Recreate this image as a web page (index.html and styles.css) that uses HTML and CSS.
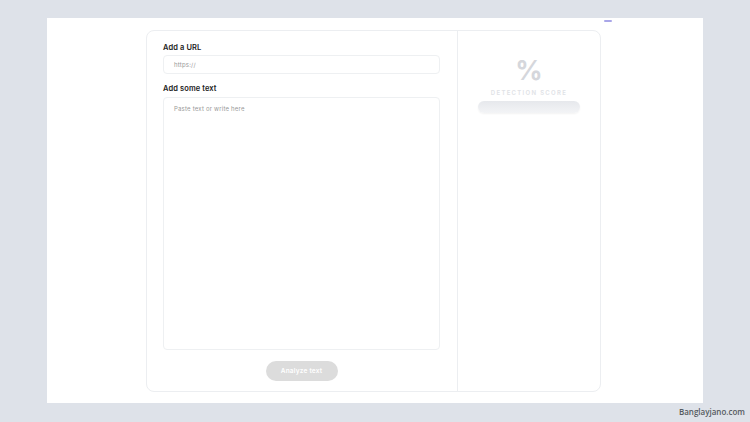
FILE: index.html
```html
<!DOCTYPE html>
<html lang="en">
<head>
  <meta charset="UTF-8">
  <meta name="viewport" content="width=device-width, initial-scale=1.0">
  <title>AI Content Detector</title>
  <link rel="stylesheet" href="styles.css">
</head>
<body>
  <div class="page">
    <span class="corner-mark"></span>
    <div class="detector">
      <div class="input-side">
        <label class="field-label">Add a URL</label>
        <div class="url-input">https://</div>
        <label class="field-label second">Add some text</label>
        <div class="text-input">Paste text or write here</div>
        <div class="actions">
          <button class="analyze-btn">Analyze text</button>
        </div>
      </div>
      <div class="score-side">
        <div class="percent">%</div>
        <div class="score-label">DETECTION SCORE</div>
        <div class="score-bar"></div>
      </div>
    </div>
  </div>
  <div class="watermark">Banglayjano.com</div>
</body>
</html>
```

FILE: styles.css
```css
body {
  margin: 0;
  padding-top: 18px;
  background: #dee2e9;
  font-family: 'Inter', 'Lato', sans-serif;
  height: 404px;
  overflow: hidden;
}

.page {
  position: relative;
  margin-left: 47px;
  width: 656px;
  height: 385px;
  background: #fff;
  padding-top: 12px;
  box-sizing: border-box;
}

.corner-mark {
  position: absolute;
  left: 557px;
  top: 2px;
  width: 8px;
  height: 2px;
  background: #a9a6e8;
  border-radius: 1px;
}

.detector {
  display: flex;
  margin-left: 99px;
  width: 455px;
  height: 362px;
  border: 1px solid #eceef1;
  border-radius: 8px;
  box-sizing: border-box;
}

.input-side {
  width: 311px;
  padding: 11px 17px 0 16px;
  box-sizing: border-box;
  border-right: 1px solid #eceef1;
  display: flex;
  flex-direction: column;
}

.field-label {
  font-size: 7.5px;
  font-weight: 600;
  color: #222;
  height: 12px;
  line-height: 12px;
  letter-spacing: 0.1px;
}

.field-label.second {
  margin-top: 9px;
}

.url-input,
.text-input {
  border: 1px solid #eef0f2;
  border-radius: 4px;
  font-size: 6px;
  color: #999;
  padding: 0 10px;
  box-sizing: border-box;
  letter-spacing: 0.2px;
}

.url-input {
  height: 19px;
  line-height: 17px;
  margin-top: 1px;
}

.text-input {
  height: 253px;
  padding-top: 7px;
  margin-top: 2px;
}

.actions {
  display: flex;
  justify-content: center;
  margin-top: 11px;
}

.analyze-btn {
  width: 72px;
  height: 20px;
  border: none;
  border-radius: 10px;
  background: #dcdcdc;
  color: #fff;
  font-family: inherit;
  font-size: 6.5px;
  font-weight: 600;
  letter-spacing: 0.2px;
}

.score-side {
  flex: 1;
  display: flex;
  flex-direction: column;
  align-items: center;
  padding-top: 25px;
}

.percent {
  font-size: 27px;
  font-weight: 700;
  color: #d5d7dc;
  line-height: 30px;
}

.score-label {
  margin-top: 3px;
  font-size: 6px;
  font-weight: 600;
  letter-spacing: 1.3px;
  color: #e0e2e6;
}

.score-bar {
  margin-top: 5px;
  width: 102px;
  height: 12px;
  border-radius: 6px;
  background: linear-gradient(to bottom, #e6e8ec, #f3f4f6);
  box-shadow: 0 1px 2px rgba(0, 0, 0, 0.05);
}

.watermark {
  text-align: right;
  padding-right: 5px;
  margin-top: 3px;
  font-family: 'Open Sans', sans-serif;
  font-weight: 600;
  font-size: 8px;
  color: #555a60;
}
```
